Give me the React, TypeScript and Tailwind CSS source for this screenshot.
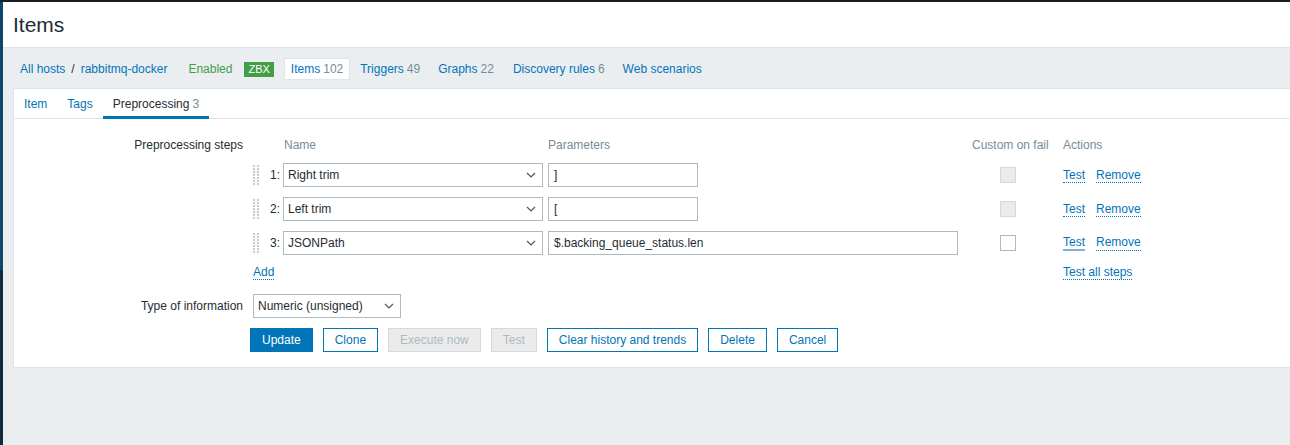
import React from "react";

const Chevron = () => (
  <svg width="10" height="6" viewBox="0 0 10 6" className="absolute right-[6px] top-1/2 -translate-y-1/2">
    <polyline points="1,1 5,5 9,1" fill="none" stroke="#555" strokeWidth="1.2" />
  </svg>
);

const Select = ({ value, w }: { value: string; w: string }) => (
  <div className={`relative h-[24px] ${w} border border-[#acbbc2] bg-white flex items-center pl-[4px] text-[#1f2c33]`}>
    {value}
    <Chevron />
  </div>
);

const Handle = () => (
  <svg width="6" height="20" viewBox="0 0 6 20">
    {[0, 3, 6, 9, 12, 15, 18].map((y) => (
      <g key={y}>
        <rect x="0" y={y} width="2" height="2" fill="#c3ccd1" />
        <rect x="4" y={y} width="2" height="2" fill="#c3ccd1" />
      </g>
    ))}
  </svg>
);

const DLink = ({ children, solid }: { children: React.ReactNode; solid?: boolean }) => (
  <span
    className={
      solid
        ? "text-[#0275b8] border-b-2 border-solid border-[#7fb3d9] leading-[14px]"
        : "text-[#0275b8] border-b border-dotted border-[#0275b8] leading-[14px]"
    }
  >
    {children}
  </span>
);

const steps = [
  { n: "1:", name: "Right trim", param: "]", wide: false, disabled: true },
  { n: "2:", name: "Left trim", param: "[", wide: false, disabled: true },
  { n: "3:", name: "JSONPath", param: "$.backing_queue_status.len", wide: true, disabled: false },
];

export default function App() {
  return (
    <div
      className="w-[1290px] h-[445px] overflow-hidden flex flex-col bg-[#1b1d1f] text-[12px] text-[#1f2c33]"
      style={{ fontFamily: '"Liberation Sans", Arial, sans-serif' }}
    >
      <div className="h-[2px] shrink-0" />
      <div className="flex flex-1 min-h-0">
        <div className="w-[3px] flex flex-col shrink-0">
          <div className="h-[268px] bg-[#0b486c]" />
          <div className="flex-1 bg-[#0e2b3f]" />
        </div>
        <div className="flex-1 flex flex-col bg-[#ebeef0] min-w-0">
          <div className="h-[46px] bg-white border-b border-[#dfe4e7] flex items-center pl-[10px] shrink-0">
            <h1 className="text-[21px] text-[#1f2c33] leading-none">Items</h1>
          </div>
          <div className="h-[40px] pt-[2px] flex items-center pl-[17px] shrink-0">
            <span className="text-[#0275b8]">All hosts</span>
            <span className="mx-[6px] text-[#1f2c33]">/</span>
            <span className="text-[#0275b8]">rabbitmq-docker</span>
            <span className="ml-[21px] text-[#429e47]">Enabled</span>
            <span className="ml-[12px] bg-[#429e47] text-white text-[11px] h-[15px] px-[4px] flex items-center">ZBX</span>
            <span className="ml-[10px] bg-white border border-[#dfe4e7] h-[22px] px-[6px] flex items-center text-[#0275b8]">
              Items<span className="ml-[3px] text-[#768d99]">102</span>
            </span>
            <span className="ml-[10px] text-[#0275b8]">
              Triggers<span className="ml-[3px] text-[#768d99]">49</span>
            </span>
            <span className="ml-[18px] text-[#0275b8]">
              Graphs<span className="ml-[3px] text-[#768d99]">22</span>
            </span>
            <span className="ml-[19px] text-[#0275b8]">
              Discovery rules<span className="ml-[3px] text-[#768d99]">6</span>
            </span>
            <span className="ml-[18px] text-[#0275b8]">Web scenarios</span>
          </div>
          <div className="ml-[10px] bg-white border-l border-y border-[#dfe4e7] shrink-0">
            <div className="h-[30px] flex border-b border-[#dfe4e7]">
              <div className="px-[10px] flex items-center text-[#0275b8]">Item</div>
              <div className="px-[10px] flex items-center text-[#0275b8]">Tags</div>
              <div className="px-[10px] flex items-center relative">
                Preprocessing<span className="ml-[3px] text-[#768d99]">3</span>
                <div className="absolute left-0 right-0 bottom-[-1px] h-[3px] bg-[#0275b8]" />
              </div>
            </div>
            <div className="pt-[18px] pb-[15px]">
              {/* Preprocessing steps */}
              <div className="flex">
                <div className="w-[229px] text-right leading-[16px]">Preprocessing steps</div>
                <div className="ml-[10px] flex flex-col">
                  <div className="flex h-[16px] items-center text-[#768d99]">
                    <div className="w-[30px]" />
                    <div className="w-[265px] pl-[1px]">Name</div>
                    <div className="w-[420px]">Parameters</div>
                    <div className="w-[95px] pl-[4px]">Custom on fail</div>
                    <div>Actions</div>
                  </div>
                  <div className="flex flex-col gap-[10px] mt-[10px]">
                    {steps.map((s) => (
                      <div key={s.n} className="flex h-[24px] items-center">
                        <div className="w-[15px] flex items-center">
                          <Handle />
                        </div>
                        <div className="w-[12px] text-right">{s.n}</div>
                        <div className="w-[3px]" />
                        <Select value={s.name} w="w-[260px]" />
                        <div className="w-[5px]" />
                        <div className="w-[420px]">
                          <div
                            className={`h-[24px] ${s.wide ? "w-[410px]" : "w-[150px]"} border border-[#acbbc2] bg-white flex items-center pl-[5px]`}
                          >
                            {s.param}
                          </div>
                        </div>
                        <div className="w-[95px] flex">
                          <div
                            className={`ml-[32px] w-[16px] h-[16px] border ${
                              s.disabled ? "bg-[#ebebeb] border-[#d3d9dc]" : "bg-white border-[#acbbc2]"
                            }`}
                          />
                        </div>
                        <div className="flex gap-[11px]">
                          <DLink solid={!s.disabled}>Test</DLink>
                          <DLink>Remove</DLink>
                        </div>
                      </div>
                    ))}
                  </div>
                  <div className="flex h-[16px] items-center mt-[9px]">
                    <div className="w-[810px]">
                      <DLink>Add</DLink>
                    </div>
                    <DLink>Test all steps</DLink>
                  </div>
                </div>
              </div>
              {/* Type of information */}
              <div className="flex mt-[14px] items-center">
                <div className="w-[229px] text-right">Type of information</div>
                <div className="ml-[10px]">
                  <Select value="Numeric (unsigned)" w="w-[148px]" />
                </div>
              </div>
              {/* Buttons */}
              <div className="flex mt-[10px]">
                <div className="w-[236px]" />
                <div className="flex gap-[10px]">
                  <div className="h-[24px] px-[11px] border border-[#0275b8] bg-[#0275b8] text-white flex items-center">Update</div>
                  <div className="h-[24px] px-[11px] border border-[#0275b8] bg-white text-[#0275b8] flex items-center">Clone</div>
                  <div className="h-[24px] px-[11px] border border-[#d3d9dc] bg-[#ebebeb] text-[#acbbc2] flex items-center">Execute now</div>
                  <div className="h-[24px] px-[11px] border border-[#d3d9dc] bg-[#ebebeb] text-[#acbbc2] flex items-center">Test</div>
                  <div className="h-[24px] px-[11px] border border-[#0275b8] bg-white text-[#0275b8] flex items-center">Clear history and trends</div>
                  <div className="h-[24px] px-[11px] border border-[#0275b8] bg-white text-[#0275b8] flex items-center">Delete</div>
                  <div className="h-[24px] px-[11px] border border-[#0275b8] bg-white text-[#0275b8] flex items-center">Cancel</div>
                </div>
              </div>
            </div>
          </div>
        </div>
      </div>
    </div>
  );
}
